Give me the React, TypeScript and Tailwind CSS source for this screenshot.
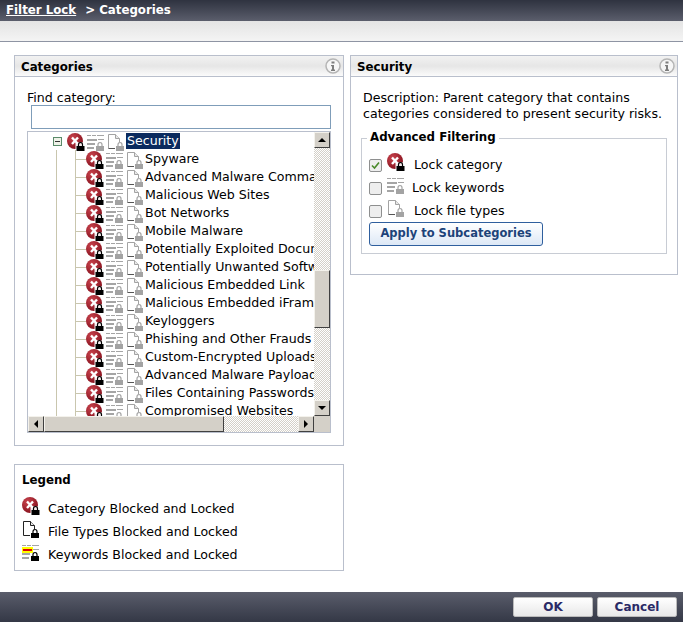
import React from "react";

function Lock({ x, y, c = "#000", s = 1 }: { x: number; y: number; c?: string; s?: number }) {
  return (
    <g transform={`translate(${x} ${y}) scale(${s})`}>
      <path d="M2 4V2.6C2 1.2 3 .5 4 .5s2 .7 2 2.1V4" fill="none" stroke={c} strokeWidth="1.2" />
      <rect x="0" y="4" width="8" height="5" fill={c} />
    </g>
  );
}

function BlockIcon() {
  return (
    <svg width="18" height="18" viewBox="0 0 18 18" className="shrink-0">
      <defs>
        <radialGradient id="rg" cx="35%" cy="30%" r="75%">
          <stop offset="0" stopColor="#c9444e" />
          <stop offset="1" stopColor="#86101c" />
        </radialGradient>
      </defs>
      <circle cx="8" cy="8" r="8" fill="url(#rg)" />
      <path d="M5 4.5 11 11M11 4.5 5 11" stroke="#fff" strokeWidth="2.4" />
      <path d="M8.5 18V9.5h9.5V18z" fill="#fff" opacity=".9" />
      <Lock x={9.5} y={9} />
    </svg>
  );
}

function KeywordIcon({ lock = "#a3a3a3", hl = false }: { lock?: string; hl?: boolean }) {
  return (
    <svg width="18" height="18" viewBox="0 0 18 18" className="shrink-0">
      <g fill="#a5a5a5">
        <rect x="0" y="2" width="4" height="1" />
        <rect x="5" y="2" width="4" height="1" />
        <rect x="10" y="2" width="7" height="1" />
        <rect x="0" y="6" width="10" height="2" />
        <rect x="11" y="6" width="6" height="1" />
        <rect x="0" y="10" width="8" height="2" />
        <rect x="0" y="14" width="7" height="2" />
      </g>
      {hl && (
        <>
          <rect x="0" y="4" width="11" height="6" fill="#ffff00" />
          <rect x="1" y="6" width="9" height="2" fill="#e00000" />
        </>
      )}
      <Lock x={9} y={9} c={lock} />
    </svg>
  );
}

function FileIcon({ lock = "#a3a3a3", line = "#a3a3a3" }: { lock?: string; line?: string }) {
  return (
    <svg width="18" height="18" viewBox="0 0 18 18" className="shrink-0">
      <path d="M1.5 15.5V1.5h7l4 4V9" fill="#fff" stroke={line} />
      <path d="M8.5 1.5V5.5H12.5" fill="#e8e8e8" stroke={line} />
      <path d="M1.5 15.5H8" fill="none" stroke={line === "#a3a3a3" ? "#555" : line} />
      <Lock x={9} y={9} c={lock} />
    </svg>
  );
}

function InfoIcon() {
  return (
    <svg width="16" height="16" viewBox="0 0 16 16" className="shrink-0">
      <circle cx="8" cy="8" r="7" fill="#f6f6f6" stroke="#b5b5b5" strokeWidth="1.5" />
      <rect x="6.5" y="3.5" width="3" height="2" fill="#7d7d7d" />
      <path d="M6 7h3v4.5h1V13H6v-1.5h1V8.3H6z" fill="#7d7d7d" />
    </svg>
  );
}

const rows = [
  "Spyware",
  "Advanced Malware Command and Control",
  "Malicious Web Sites",
  "Bot Networks",
  "Mobile Malware",
  "Potentially Exploited Documents",
  "Potentially Unwanted Software",
  "Malicious Embedded Link",
  "Malicious Embedded iFrame",
  "Keyloggers",
  "Phishing and Other Frauds",
  "Custom-Encrypted Uploads",
  "Advanced Malware Payloads",
  "Files Containing Passwords",
  "Compromised Websites",
];

const checker =
  "bg-[repeating-conic-gradient(#d4d0c8_0_25%,#ffffff_0_50%)] bg-[length:2px_2px]";
const sbButton =
  "flex h-4 w-4 shrink-0 items-center justify-center bg-[#d4d0c8] border border-t-[#f4f2ec] border-l-[#f4f2ec] border-r-[#404040] border-b-[#404040]";

function Arrow({ d }: { d: "up" | "down" | "left" | "right" }) {
  const p = {
    up: "M4 2 0 6h8z",
    down: "M0 2h8L4 6z",
    left: "M6 0v8L2 4z",
    right: "M2 0v8l4-4z",
  }[d];
  return (
    <svg width="8" height="8" viewBox="0 0 8 8">
      <path d={p} fill="#000" />
    </svg>
  );
}

function PanelHeader({ title }: { title: string }) {
  return (
    <div className="flex h-[21px] items-center justify-between border-b border-[#b9bfcc] bg-gradient-to-b from-[#f2f2f2] via-[#e6e6e6] to-[#fbfbfb] pl-[6px] pr-[2px]">
      <span className="pt-[4px] text-[11.8px] font-bold leading-none text-black">{title}</span>
      <InfoIcon />
    </div>
  );
}

function Check({ checked, icon, label, gap }: { checked?: boolean; icon: React.ReactNode; label: string; gap: string }) {
  return (
    <div className="flex h-[23px] items-center">
      <span className="flex h-[13px] w-[13px] items-center justify-center rounded-[2px] border border-[#8e8f8f] bg-[#eeeeee]">
        {checked && (
          <svg width="9" height="9" viewBox="0 0 9 9">
            <path d="M1 4.5 3.5 7 8 1.5" fill="none" stroke="#4a8a2a" strokeWidth="1.6" />
          </svg>
        )}
      </span>
      <span className="ml-[5px] -mt-[7px] flex">{icon}</span>
      <span className={gap}>{label}</span>
    </div>
  );
}

function TreeIcons() {
  return (
    <span className="mt-[2px] flex w-[59px] shrink-0 gap-[2px]">
      <BlockIcon />
      <KeywordIcon />
      <FileIcon />
    </span>
  );
}

export default function App() {
  return (
    <div className="flex h-[622px] w-[683px] flex-col overflow-hidden bg-white text-[12.6px] leading-none text-black [font-family:'DejaVu_Sans',Verdana,sans-serif]">
      <div className="flex h-[21px] shrink-0 items-center bg-gradient-to-b from-[#2f3340] to-[#5b5e6c] pl-[6px] text-[11.8px] font-bold text-white">
        <span className="underline">Filter Lock</span>
        <span className="ml-[9px]">&gt; Categories</span>
      </div>
      <div className="h-[21px] shrink-0 border-b border-[#8e94a3] bg-gradient-to-b from-[#e4e4e4] to-[#f4f4f4]" />

      <div className="flex flex-1 items-start pl-[14px] pt-[13px]">
        <div className="flex w-[330px] flex-col gap-[18px]">
          <section className="h-[391px] border border-[#b9bfcc]">
            <PanelHeader title="Categories" />
            <div className="h-[25px] pl-[12px] pt-[15px]">Find category:</div>
            <input className="ml-[16px] mt-[3px] block h-[24px] w-[300px] border border-[#7f9db9] bg-white" />
            <div className="ml-[12px] mt-[2px] flex h-[302px] w-[304px] flex-col border border-[#b9bfcc]">
              <div className="flex min-h-0 flex-1">
                <div className="min-w-0 flex-1 overflow-hidden">
                  <div className="flex h-[18px] items-center">
                    <span className="ml-[25px] flex h-[9px] w-[9px] shrink-0 items-center justify-center border border-[#5a8a6a] bg-[#eef2e8]">
                      <span className="h-px w-[5px] bg-[#333]" />
                    </span>
                    <span className="ml-[5px] flex">
                      <TreeIcons />
                    </span>
                    <span className="bg-[#0a2a5e] px-[1px] py-[2px] text-white">Security</span>
                  </div>
                  {rows.map((r) => (
                    <div key={r} className="flex h-[18px] items-center">
                      <div className="ml-[28px] h-full w-[19px] shrink-0 border-l border-[#c9c6ae]" />
                      <div className="flex h-full w-[11px] shrink-0 items-center border-l border-[#c9c6ae]">
                        <div className="h-px w-full bg-[#c9c6ae]" />
                      </div>
                      <TreeIcons />
                      <span className="whitespace-nowrap">{r}</span>
                    </div>
                  ))}
                </div>
                <div className="flex w-[16px] shrink-0 flex-col">
                  <div className={sbButton}><Arrow d="up" /></div>
                  <div className={`h-[122px] ${checker}`} />
                  <div className="h-[58px] border border-t-[#f4f2ec] border-l-[#f4f2ec] border-r-[#404040] border-b-[#404040] bg-[#d4d0c8]" />
                  <div className={`flex-1 ${checker}`} />
                  <div className={sbButton}><Arrow d="down" /></div>
                </div>
              </div>
              <div className="flex h-[16px] shrink-0">
                <div className={sbButton}><Arrow d="left" /></div>
                <div className="w-[180px] border border-t-[#f4f2ec] border-l-[#f4f2ec] border-r-[#404040] border-b-[#404040] bg-[#d4d0c8]" />
                <div className={`flex-1 ${checker}`} />
                <div className={sbButton}><Arrow d="right" /></div>
                <div className="w-[16px] bg-[#d4d0c8]" />
              </div>
            </div>
          </section>

          <section className="h-[107px] border border-[#b9bfcc] pl-[7px] pt-[10px]">
            <div className="text-[11.8px] font-bold">Legend</div>
            <div className="mt-[11px] flex h-[23px] items-center">
              <span className="-mt-[7px] flex"><BlockIcon /></span>
              <span className="ml-[8px]">Category Blocked and Locked</span>
            </div>
            <div className="flex h-[23px] items-center">
              <span className="-mt-[7px] flex"><FileIcon lock="#000" line="#222" /></span>
              <span className="ml-[8px]">File Types Blocked and Locked</span>
            </div>
            <div className="flex h-[23px] items-center">
              <span className="-mt-[7px] flex"><KeywordIcon lock="#000" hl /></span>
              <span className="ml-[8px]">Keywords Blocked and Locked</span>
            </div>
          </section>
        </div>

        <section className="ml-[6px] h-[220px] w-[328px] border border-[#b9bfcc]">
          <PanelHeader title="Security" />
          <div className="pl-[12px] pt-[13px] leading-[16px]">
            Description: Parent category that contains
            <br />
            categories considered to present security risks.
          </div>
          <div className="relative mx-[10px] mt-[16px] h-[116px] border border-[#c8ccd4] pl-[7px] pt-[15px]">
            <div className="absolute -top-[7px] left-[5px] bg-white px-[3px] text-[11.8px] font-bold">Advanced Filtering</div>
            <Check checked icon={<BlockIcon />} label="Lock category" gap="ml-[9px]" />
            <Check icon={<KeywordIcon />} label="Lock keywords" gap="ml-[7px]" />
            <Check icon={<FileIcon />} label="Lock file types" gap="ml-[9px]" />
            <button className="-mt-[1px] block h-[24px] w-[174px] rounded-[3px] border border-[#2f5f9e] bg-gradient-to-b from-white to-[#dde8f6] text-[11.5px] font-bold text-[#1d4379]">
              Apply to Subcategories
            </button>
          </div>
        </section>
      </div>

      <div className="flex h-[30px] shrink-0 items-center justify-end gap-[4px] bg-gradient-to-b from-[#5a5d6b] to-[#343846] pr-[6px]">
        <button className="h-[20px] w-[80px] rounded-[2px] border border-[#bbbbbb] bg-gradient-to-b from-white to-[#e8e8e8] text-[12px] font-bold text-[#2a2a66]">OK</button>
        <button className="h-[20px] w-[80px] rounded-[2px] border border-[#bbbbbb] bg-gradient-to-b from-white to-[#e8e8e8] text-[12px] font-bold text-[#2a2a66]">Cancel</button>
      </div>
    </div>
  );
}
